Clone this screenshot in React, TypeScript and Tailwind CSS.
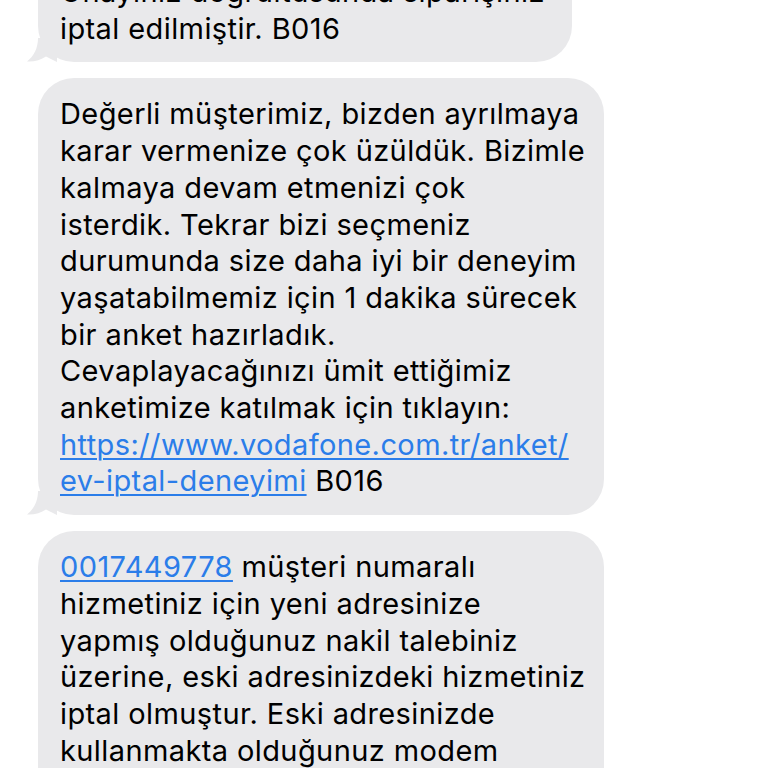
import type { ReactNode } from 'react'

function Tail() {
  return (
    <svg
      className="absolute -left-[11px] bottom-0 h-[24px] w-[30px]"
      viewBox="0 0 30 24"
      fill="#e9e9eb"
    >
      <path d="M11 0 C11 10 7 18 0 23.5 C7 24 14 22 19 18.5 L30 24 L30 0 Z" />
    </svg>
  )
}

function Bubble({ children, className = '' }: { children: ReactNode; className?: string }) {
  return (
    <div className={`relative rounded-[36px] bg-[#e9e9eb] pl-[22px] pr-[18px] pt-[18px] pb-[15px] ${className}`}>
      <div className="whitespace-nowrap text-[29px] leading-[36.7px] tracking-[0.4px] text-black">{children}</div>
      <Tail />
    </div>
  )
}

function Link({ children }: { children: ReactNode }) {
  return <span className="text-[#2b7de9] underline decoration-[1.5px] underline-offset-[3px]">{children}</span>
}

export default function App() {
  return (
    <div
      className="h-[768px] w-[768px] overflow-hidden bg-white"
      style={{ fontFamily: 'Inter, "Noto Sans", sans-serif' }}
    >
      <div className="flex flex-col items-start gap-[16px] pl-[38px] -mt-[44px]">
        <Bubble className="w-[534px]">
          Onayınız doğrultusunda siparişiniz
          <br />
          iptal edilmiştir. B016
        </Bubble>

        <Bubble className="w-[566px]">
          Değerli müşterimiz, bizden ayrılmaya
          <br />
          karar vermenize çok üzüldük. Bizimle
          <br />
          kalmaya devam etmenizi çok
          <br />
          isterdik. Tekrar bizi seçmeniz
          <br />
          durumunda size daha iyi bir deneyim
          <br />
          yaşatabilmemiz için 1 dakika sürecek
          <br />
          bir anket hazırladık.
          <br />
          Cevaplayacağınızı ümit ettiğimiz
          <br />
          anketimize katılmak için tıklayın:
          <br />
          <Link>https://www.vodafone.com.tr/anket/</Link>
          <br />
          <Link>ev-iptal-deneyimi</Link> B016
        </Bubble>

        <Bubble className="w-[566px]">
          <Link>0017449778</Link> müşteri numaralı
          <br />
          hizmetiniz için yeni adresinize
          <br />
          yapmış olduğunuz nakil talebiniz
          <br />
          üzerine, eski adresinizdeki hizmetiniz
          <br />
          iptal olmuştur. Eski adresinizde
          <br />
          kullanmakta olduğunuz modem
          <br />
          cihazını en yakın mağazamıza
        </Bubble>
      </div>
    </div>
  )
}
